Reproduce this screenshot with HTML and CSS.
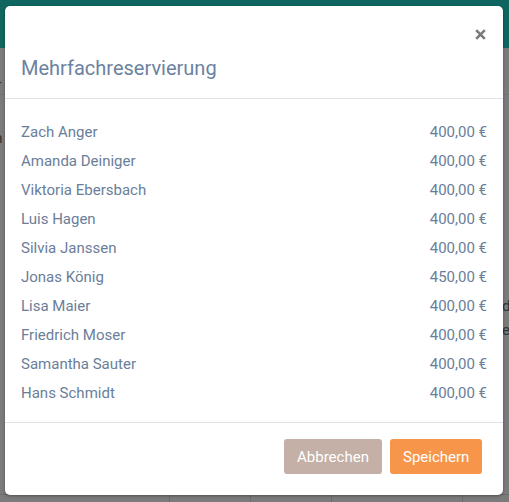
FILE: index.html
```html
<!DOCTYPE html>
<html lang="de">
<head>
<meta charset="utf-8">
<title>Mehrfachreservierung</title>
<link rel="stylesheet" href="styles.css">
</head>
<body>
<div class="page">
  <div class="topbar"></div>
  <div class="page-content">
    <div class="bg-line bg-line-a"><span class="bg-text">Ter</span></div>
    <div class="bg-line bg-line-b"><span class="bg-text">Plan</span></div>
    <div class="bg-side"><span class="bg-text">de</span><span class="bg-text">e</span></div>
  </div>
  <div class="bg-table">
    <div class="bg-cell c1"></div>
    <div class="bg-cell c2"></div>
    <div class="bg-cell c3"></div>
    <div class="bg-cell c4"></div>
    <div class="bg-cell c5"></div>
  </div>
</div>

<div class="modal">
  <div class="modal-header">
    <button class="close" aria-label="Schließen">
      <svg width="11" height="11" viewBox="0 0 11 11"><path d="M1.2 1.2 L9.8 9.8 M9.8 1.2 L1.2 9.8" stroke="currentColor" stroke-width="2.6" stroke-linecap="butt"/></svg>
    </button>
    <h4 class="modal-title">Mehrfachreservierung</h4>
  </div>
  <div class="modal-body">
    <div class="row"><span>Zach Anger</span><span>400,00 €</span></div>
    <div class="row"><span>Amanda Deiniger</span><span>400,00 €</span></div>
    <div class="row"><span>Viktoria Ebersbach</span><span>400,00 €</span></div>
    <div class="row"><span>Luis Hagen</span><span>400,00 €</span></div>
    <div class="row"><span>Silvia Janssen</span><span>400,00 €</span></div>
    <div class="row"><span>Jonas König</span><span>450,00 €</span></div>
    <div class="row"><span>Lisa Maier</span><span>400,00 €</span></div>
    <div class="row"><span>Friedrich Moser</span><span>400,00 €</span></div>
    <div class="row"><span>Samantha Sauter</span><span>400,00 €</span></div>
    <div class="row"><span>Hans Schmidt</span><span>400,00 €</span></div>
  </div>
  <div class="modal-footer">
    <button class="btn btn-cancel">Abbrechen</button>
    <button class="btn btn-save">Speichern</button>
  </div>
</div>
</body>
</html>
```
FILE: styles.css
```css
html, body {
  margin: 0;
  padding: 0;
}
body {
  width: 509px;
  height: 502px;
  overflow: hidden;
  background: #7b7b7b;
  font-family: Roboto, "Liberation Sans", sans-serif;
  position: relative;
}
.page {
  display: flex;
  flex-direction: column;
  height: 502px;
}
.topbar {
  height: 48px;
  background: #0f6560;
  flex: none;
}
.page-content {
  flex: 1;
  position: relative;
  color: #3a3a3a;
  font-size: 15px;
}
.bg-line {
  border-bottom: 1px solid #727272;
  height: 18px;
  padding-left: 0;
}
.bg-line-a {
  margin-top: 28px;
  padding-top: 0;
  margin-left: -20px;
}
.bg-line-b {
  margin-top: 34px;
  margin-left: -27px;
  border-bottom: none;
}
.bg-side {
  display: flex;
  flex-direction: column;
  align-items: flex-start;
  margin-top: 150px;
  margin-left: 502px;
  gap: 6px;
}
.bg-text {
  color: #333;
}
.bg-table {
  height: 7px;
  flex: none;
  border-top: 1px solid #6c6c6c;
  display: flex;
}
.bg-cell {
  border-right: 1px solid #6c6c6c;
}
.c1 { width: 169px; }
.c2 { width: 80px; }
.c3 { width: 80px; }
.c4 { width: 130px; }
.c5 { flex: 1; border-right: none; }

.modal {
  position: absolute;
  left: 5px;
  top: 6px;
  width: 498px;
  height: 489px;
  box-sizing: border-box;
  background: #fff;
  border-radius: 5px;
  box-shadow: 0 1px 3px rgba(0, 0, 0, 0.35);
  display: flex;
  flex-direction: column;
}
.modal-header {
  padding: 23px 17px 18px 16px;
  border-bottom: 1px solid #e1e0e6;
  display: flex;
  flex-direction: column;
}
.close {
  align-self: flex-end;
  padding: 0;
  margin: 0;
  border: none;
  background: none;
  color: #7a7a7a;
  display: block;
  height: 11px;
  line-height: 0;
  cursor: pointer;
}
.close svg {
  display: block;
}
.modal-title {
  margin: 16px 0 0 0;
  font-size: 20px;
  line-height: 24px;
  font-weight: 400;
  color: #6b82a0;
}
.modal-body {
  padding: 19px 16px 14px 16px;
  border-bottom: 1px solid #e1e0e6;
}
.row {
  display: flex;
  justify-content: space-between;
  height: 29px;
  line-height: 29px;
  font-size: 15px;
  color: #6a7e99;
}
.modal-footer {
  padding: 16px 21px 0 16px;
  display: flex;
  justify-content: flex-end;
  gap: 8px;
}
.btn {
  height: 35px;
  padding: 0 13px;
  border: none;
  border-radius: 3px;
  font-family: Roboto, "Liberation Sans", sans-serif;
  font-size: 15px;
  color: #fff;
  cursor: pointer;
}
.btn-cancel {
  background: #c4b0a6;
  width: 98px;
}
.btn-save {
  background: #f7954a;
  width: 92px;
}
```
